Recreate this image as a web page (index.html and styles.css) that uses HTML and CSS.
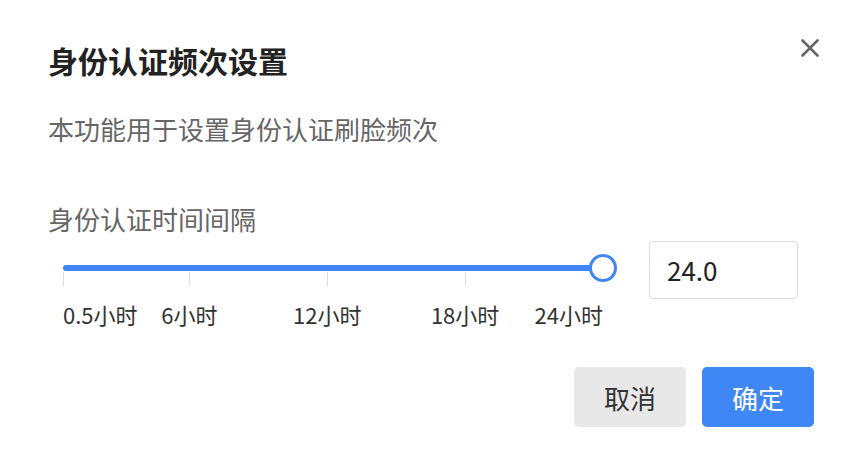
FILE: index.html
```html
<!DOCTYPE html>
<html lang="zh-CN">
<head>
<meta charset="utf-8">
<title>身份认证频次设置</title>
<link rel="stylesheet" href="styles.css">
</head>
<body>
<div class="dialog">
  <div class="header">
    <h1 class="title">身份认证频次设置</h1>
    <button class="close" aria-label="关闭">
      <svg width="20" height="20" viewBox="0 0 20 20"><path d="M2.5 2.5 L17.5 17.5 M17.5 2.5 L2.5 17.5" stroke="#666" stroke-width="2.6" stroke-linecap="round"/></svg>
    </button>
  </div>
  <p class="desc">本功能用于设置身份认证刷脸频次</p>
  <div class="label">身份认证时间间隔</div>
  <div class="slider-row">
    <div class="slider">
      <div class="track-wrap">
        <div class="track"><div class="bar" style="width:100%"></div></div>
        <span class="tick" style="left:0%"></span>
        <span class="tick" style="left:23.404%"></span>
        <span class="tick" style="left:48.936%"></span>
        <span class="tick" style="left:74.468%"></span>
        <span class="thumb" style="left:100%"></span>
      </div>
      <div class="marks">
        <span class="mark first" style="left:0%">0.5小时</span>
        <span class="mark" style="left:23.404%">6小时</span>
        <span class="mark" style="left:48.936%">12小时</span>
        <span class="mark" style="left:74.468%">18小时</span>
        <span class="mark last" style="left:100%">24小时</span>
      </div>
    </div>
    <div class="input">24.0</div>
  </div>
  <div class="footer">
    <button class="btn cancel">取消</button>
    <button class="btn ok">确定</button>
  </div>
</div>
</body>
</html>
```
FILE: styles.css
```css
* { box-sizing: border-box; }
html, body { margin: 0; padding: 0; background: #fff; }
body {
  font-family: "Noto Sans CJK SC", "Noto Sans", sans-serif;
  color: #333;
}
.dialog {
  width: 851px;
  height: 455px;
  padding: 38px 37px 0 48px;
}
.header {
  display: flex;
  justify-content: space-between;
  align-items: flex-start;
}
.title {
  margin: 2px 0 0 0;
  font-size: 30px;
  line-height: 40px;
  font-weight: 700;
  color: #222;
}
.close {
  border: 0;
  background: none;
  padding: 0;
  margin: 0 -6px 0 0;
  width: 20px;
  height: 20px;
  display: flex;
}
.desc {
  margin: 31px 0 0 0;
  font-size: 26px;
  line-height: 36px;
  color: #666;
}
.label {
  margin-top: 54px;
  font-size: 26px;
  line-height: 36px;
  color: #666;
}
.slider-row {
  margin-top: 4px;
  margin-right: 16px;
  display: flex;
  align-items: flex-start;
  justify-content: space-between;
}
.slider {
  width: 540px;
  margin-left: 15px;
}
.track-wrap {
  position: relative;
  height: 58px;
}
.track {
  position: absolute;
  left: 0;
  right: 0;
  top: 24px;
  height: 6px;
  border-radius: 3px;
  background: #e4e7ed;
}
.bar {
  height: 100%;
  border-radius: 3px;
  background: #4186f4;
}
.tick {
  position: absolute;
  top: 31px;
  width: 1px;
  height: 14px;
  background: #dcdcdc;
}
.thumb {
  position: absolute;
  top: 13px;
  width: 28px;
  height: 28px;
  margin-left: -14px;
  border: 3px solid #4186f4;
  border-radius: 50%;
  background: #fff;
}
.marks {
  position: relative;
  height: 30px;
}
.mark {
  position: absolute;
  top: 0;
  font-size: 22px;
  line-height: 30px;
  color: #333;
  white-space: nowrap;
  transform: translateX(-50%);
}
.mark.first { transform: none; }
.mark.last { transform: translateX(-100%); }
.input {
  width: 149px;
  height: 58px;
  border: 1px solid #dcdcdc;
  border-radius: 4px;
  padding: 0 17px;
  font-size: 26px;
  line-height: 56px;
  color: #222;
}
.footer {
  margin-top: 38px;
  display: flex;
  justify-content: flex-end;
  gap: 16px;
}
.btn {
  width: 112px;
  height: 60px;
  border: 0;
  border-radius: 5px;
  font-family: inherit;
  font-size: 26px;
  padding: 0;
}
.cancel { background: #e8e8e8; color: #333; }
.ok { background: #3f87f5; color: #fff; }
```
